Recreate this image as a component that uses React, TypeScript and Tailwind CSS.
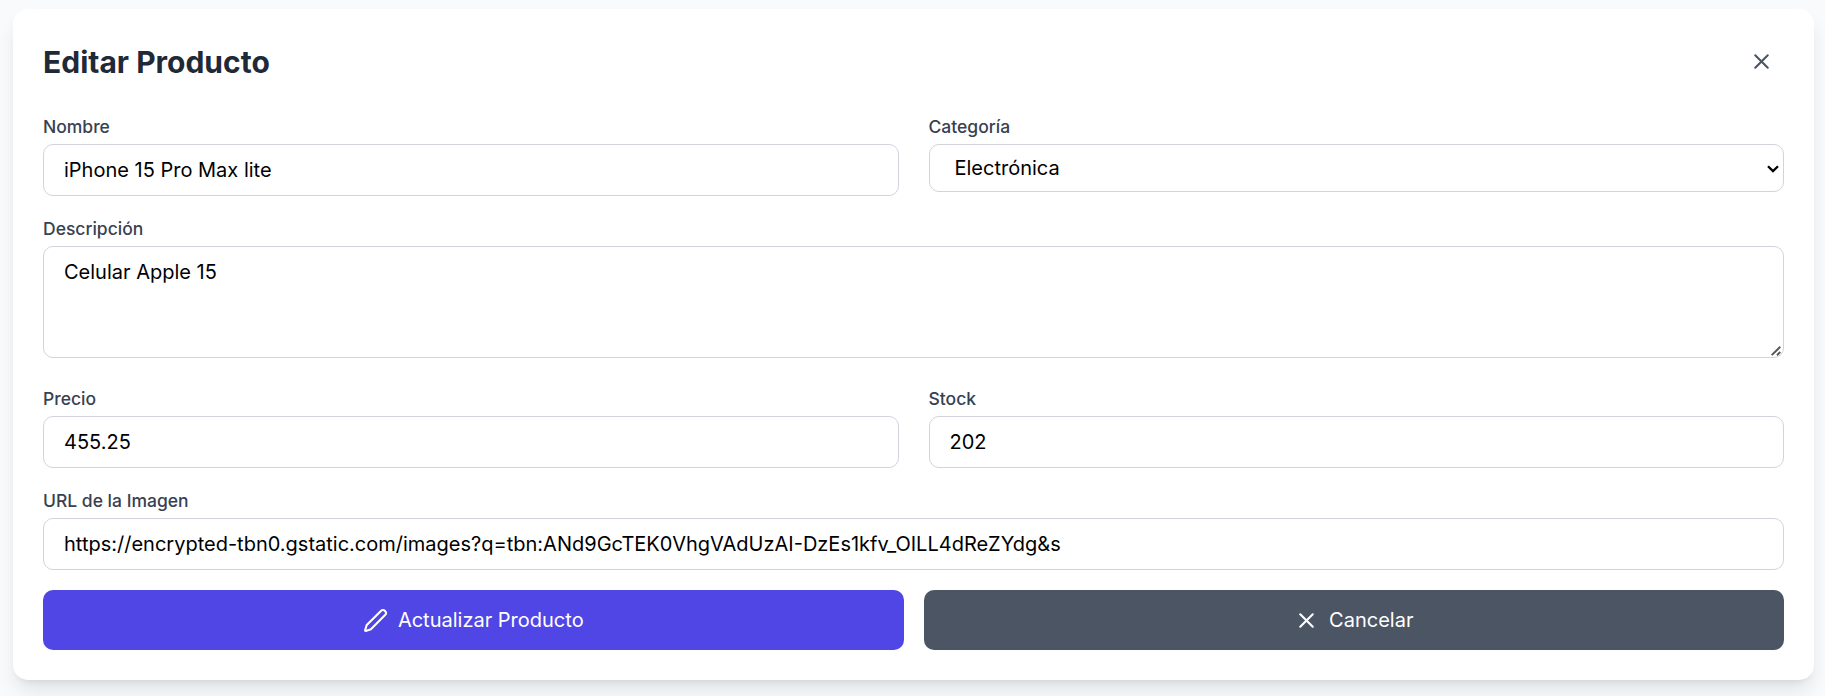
import React from "react";
import { Pen, X } from "lucide-react";

const labelClass = "mb-[5px] block text-[17.5px] leading-[25px] font-medium text-[#374151]";
const fieldClass =
  "w-full rounded-[10px] border border-[#d1d5db] bg-white px-5 py-2.5 text-[20px] leading-[30px] text-black outline-none";

function Field({ label, children }: { label: string; children: React.ReactNode }) {
  return (
    <div>
      <label className={labelClass}>{label}</label>
      {children}
    </div>
  );
}

function SelectArrow() {
  return (
    <svg className="pointer-events-none absolute top-[21px] right-[5px] h-[8px] w-[12px]" viewBox="0 0 12 8" fill="none" stroke="#000" strokeWidth="2.3">
      <path d="M1 1.2 6 6.1l5-4.9" />
    </svg>
  );
}

function ResizeGrip() {
  return (
    <svg className="pointer-events-none absolute right-[3px] bottom-[2px] size-[10px]" viewBox="0 0 10 10" fill="none" stroke="#555" strokeWidth="1.9">
      <path d="M0.7 9.1 9.3 0.8M6 9.2 9.3 6" />
    </svg>
  );
}

export default function App() {
  return (
    <div className="min-h-[696px] overflow-hidden bg-[#f9fafb] pt-[9px] pr-[11px] pl-[13px] font-['Inter',sans-serif]">
      <div className="h-[671px] rounded-[15px] bg-white p-[30px] shadow-[0_12.5px_18.75px_-3.75px_rgba(0,0,0,0.1),0_5px_7.5px_-5px_rgba(0,0,0,0.1)]">
        <div className="mb-[30px] flex items-center justify-between">
          <h2 className="text-[30px] leading-[40px] font-bold text-[#1f2937]">Editar Producto</h2>
          <button type="button" aria-label="Cerrar" className="p-2.5 text-[#4b5563]">
            <X size={25} />
          </button>
        </div>
        <form className="flex flex-col gap-5">
          <div className="grid grid-cols-2 gap-[30px]">
            <Field label="Nombre">
              <input className={fieldClass} defaultValue="iPhone 15 Pro Max lite" />
            </Field>
            <Field label="Categoría">
              <div className="relative">
                <select className="block h-12 w-full appearance-none rounded-[10px] border border-[#d1d5db] bg-white px-[25px] text-[20px] text-black outline-none">
                  <option>Electrónica</option>
                </select>
                <SelectArrow />
              </div>
            </Field>
          </div>
          <div className="mb-2">
            <Field label="Descripción">
              <div className="relative">
                <textarea className={`${fieldClass} block h-28 resize-none`} rows={3} defaultValue="Celular Apple 15" />
                <ResizeGrip />
              </div>
            </Field>
          </div>
          <div className="grid grid-cols-2 gap-[30px]">
            <Field label="Precio">
              <input className={fieldClass} defaultValue="455.25" />
            </Field>
            <Field label="Stock">
              <input className={fieldClass} defaultValue="202" />
            </Field>
          </div>
          <Field label="URL de la Imagen">
            <input
              className={fieldClass}
              defaultValue="https://encrypted-tbn0.gstatic.com/images?q=tbn:ANd9GcTEK0VhgVAdUzAI-DzEs1kfv_OILL4dReZYdg&s"
            />
          </Field>
          <div className="flex gap-5 text-[20px] leading-[30px] text-white">
            <button type="button" className="flex flex-1 items-center justify-center gap-2.5 rounded-[10px] bg-[#4f46e5] py-[15px]">
              <Pen size={25} />
              Actualizar Producto
            </button>
            <button type="button" className="flex flex-1 items-center justify-center gap-2.5 rounded-[10px] bg-[#4b5563] py-[15px]">
              <X size={25} />
              Cancelar
            </button>
          </div>
        </form>
      </div>
    </div>
  );
}
